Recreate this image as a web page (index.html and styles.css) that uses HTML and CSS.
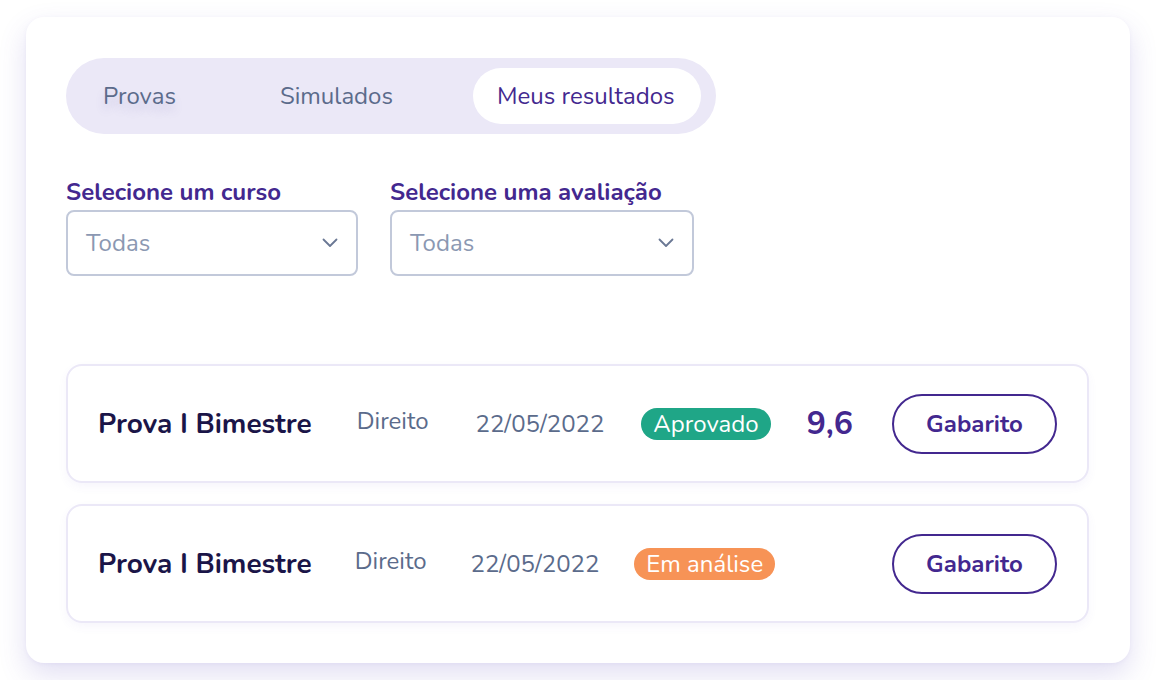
FILE: index.html
```html
<!DOCTYPE html>
<html lang="pt-BR">
<head>
<meta charset="utf-8">
<title>Meus resultados</title>
<link rel="stylesheet" href="styles.css">
</head>
<body>
<main class="panel">
  <nav class="tabs">
    <button class="tab tab-first">Provas</button>
    <button class="tab">Simulados</button>
    <button class="tab tab-active">Meus resultados</button>
  </nav>

  <section class="filters">
    <div class="field field-course">
      <label class="field-label">Selecione um curso</label>
      <div class="select">
        <span class="select-value">Todas</span>
        <svg class="chevron" width="16" height="10" viewBox="0 0 16 10"><polyline points="1.5,1.5 8,8 14.5,1.5" fill="none" stroke="#6a7894" stroke-width="1.8" stroke-linecap="round" stroke-linejoin="round"/></svg>
      </div>
    </div>
    <div class="field field-eval">
      <label class="field-label">Selecione uma avaliação</label>
      <div class="select">
        <span class="select-value">Todas</span>
        <svg class="chevron" width="16" height="10" viewBox="0 0 16 10"><polyline points="1.5,1.5 8,8 14.5,1.5" fill="none" stroke="#6a7894" stroke-width="1.8" stroke-linecap="round" stroke-linejoin="round"/></svg>
      </div>
    </div>
  </section>

  <section class="results">
    <article class="result">
      <h3 class="result-title">Prova I Bimestre</h3>
      <span class="result-course">Direito</span>
      <span class="result-date">22/05/2022</span>
      <span class="badge badge-ok">Aprovado</span>
      <span class="score">9,6</span>
      <button class="btn-outline">Gabarito</button>
    </article>
    <article class="result">
      <h3 class="result-title">Prova I Bimestre</h3>
      <span class="result-course result-course-b">Direito</span>
      <span class="result-date result-date-b">22/05/2022</span>
      <span class="badge badge-wait badge-b">Em análise</span>
      <button class="btn-outline">Gabarito</button>
    </article>
  </section>
</main>
</body>
</html>
```

FILE: styles.css
```css
* { box-sizing: border-box; }

html, body {
  margin: 0;
  background: #ffffff;
}

body {
  padding: 17px 26px;
  font-family: "Nunito", "Lato", "Open Sans", sans-serif;
  color: #5b6b8b;
}

.panel {
  width: 1104px;
  height: 646px;
  background: #ffffff;
  border-radius: 18px;
  box-shadow: 0 12px 28px rgba(96, 80, 190, 0.18), 0 1px 4px rgba(96, 80, 190, 0.06);
  padding: 41px 41px 40px 40px;
}

/* Tabs */
.tabs {
  display: inline-flex;
  align-items: center;
  width: 650px;
  height: 76px;
  padding: 10px;
  background: #ebe8f7;
  border-radius: 38px;
  gap: 56px;
}

.tab {
  border: 0;
  background: transparent;
  font-family: inherit;
  font-size: 24px;
  color: #5b6b8b;
  height: 56px;
  padding: 0 24px;
  border-radius: 28px;
  cursor: pointer;
  white-space: nowrap;
}

.tab-first {
  margin-left: 3px;
  text-shadow: 0 7px 10px rgba(90, 80, 160, 0.18);
}

.tab-active {
  background: #ffffff;
  color: #43288f;
  padding: 0 26px 0 24px;
}

/* Filters */
.filters {
  display: flex;
  gap: 32px;
  margin-top: 44px;
}

.field {
  display: flex;
  flex-direction: column;
  gap: 4px;
}

.field-course { width: 292px; }
.field-eval { width: 304px; }

.field-label {
  font-size: 24px;
  font-weight: 700;
  color: #43288f;
  line-height: 28px;
  white-space: nowrap;
}

.select {
  height: 66px;
  border: 2px solid #c2c9da;
  border-radius: 8px;
  display: flex;
  align-items: center;
  justify-content: space-between;
  padding: 0 18px 0 18px;
}

.select-value {
  font-size: 24px;
  color: #8b98b2;
}

/* Results */
.results {
  margin-top: 88px;
  display: flex;
  flex-direction: column;
  gap: 21px;
}

.result {
  height: 119px;
  border: 2px solid #ebe8f7;
  border-radius: 16px;
  display: flex;
  align-items: center;
  padding: 0 30px 0 30px;
  box-shadow: 0 4px 10px rgba(96, 80, 190, 0.05);
}

.result-title {
  margin: 0;
  font-size: 28px;
  font-weight: 700;
  color: #1b1548;
  white-space: nowrap;
}

.result-course {
  margin-left: 45px;
  margin-top: -6px;
  font-size: 24px;
  color: #5b6b8b;
}

.result-date {
  margin-left: 47px;
  font-size: 24px;
  color: #5b6b8b;
}

.result-course-b { margin-left: 43px; }
.result-date-b { margin-left: 44px; }

.badge {
  margin-left: 37px;
  height: 32px;
  line-height: 32px;
  padding: 0 12px;
  border-radius: 16px;
  color: #ffffff;
  font-size: 24px;
  white-space: nowrap;
}

.badge-b { margin-left: 35px; }

.badge-ok { background: #1fa687; }
.badge-wait { background: #f79356; }

.score {
  margin-left: 36px;
  font-size: 32px;
  font-weight: 700;
  color: #43288f;
}

.btn-outline {
  margin-left: auto;
  width: 165px;
  height: 60px;
  border: 2px solid #43288f;
  border-radius: 30px;
  background: #ffffff;
  color: #43288f;
  font-family: inherit;
  font-size: 24px;
  font-weight: 700;
  cursor: pointer;
}
```
